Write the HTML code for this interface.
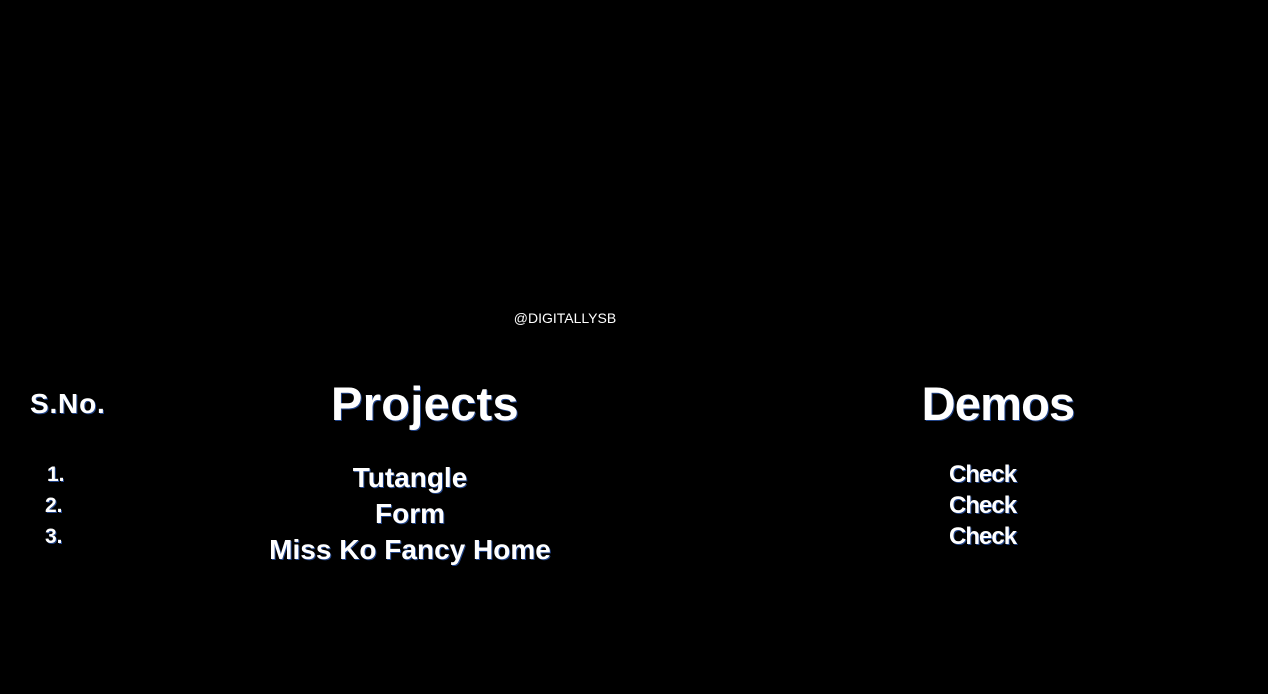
<!DOCTYPE html>
<html><head><style>
body{margin:0;width:1268px;height:694px;background:#000;color:#fff;font-family:"Liberation Sans",sans-serif;font-weight:bold;position:relative;overflow:hidden}
div{position:absolute;white-space:nowrap;text-shadow:1px 1px 0 #248}
.c{transform:translateX(-50%)}
</style></head><body>
<div class="c" style="left:565px;top:310px;font-size:14px;font-weight:normal;text-shadow:none">@DIGITALLYSB</div>
<div style="left:30px;top:388px;font-size:28px;letter-spacing:0.8px">S.No.</div>
<div class="c" style="left:425px;top:376px;font-size:47px;letter-spacing:0.3px">Projects</div>
<div class="c" style="left:998px;top:376px;font-size:47px;letter-spacing:-0.8px">Demos</div>
<div style="left:47px;top:463px;font-size:21px">1.</div>
<div style="left:45px;top:494px;font-size:21px">2.</div>
<div style="left:45px;top:525px;font-size:21px">3.</div>
<div class="c" style="left:410px;top:462px;font-size:28px;letter-spacing:0">Tutangle</div>
<div class="c" style="left:410px;top:498px;font-size:28px;letter-spacing:0">Form</div>
<div class="c" style="left:410px;top:534px;font-size:28px;letter-spacing:0">Miss Ko Fancy Home</div>
<div style="left:949px;top:461px;font-size:24px;letter-spacing:-1px">Check</div>
<div style="left:949px;top:492px;font-size:24px;letter-spacing:-1px">Check</div>
<div style="left:949px;top:523px;font-size:24px;letter-spacing:-1px">Check</div>
</body></html>
